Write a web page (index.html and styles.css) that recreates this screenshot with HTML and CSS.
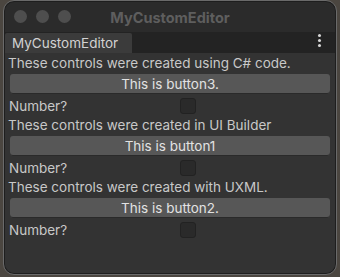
FILE: index.html
```html
<!DOCTYPE html>
<html>
<head>
<meta charset="utf-8">
<link rel="stylesheet" href="styles.css">
</head>
<body>
<div class="window">
  <div class="titlebar">
    <div class="lights">
      <span class="light"></span><span class="light"></span><span class="light"></span>
    </div>
    <div class="title">MyCustomEditor</div>
  </div>
  <div class="tabbar">
    <div class="tab">MyCustomEditor</div>
    <div class="kebab"><span></span><span></span><span></span></div>
  </div>
  <div class="content">
    <div class="group">
      <div class="label">These controls were created using C# code.</div>
      <div class="button">This is button3.</div>
      <div class="field"><span class="field-label">Number?</span><span class="checkbox"></span></div>
    </div>
    <div class="group">
      <div class="label">These controls were created in UI Builder</div>
      <div class="button">This is button1</div>
      <div class="field"><span class="field-label">Number?</span><span class="checkbox"></span></div>
    </div>
    <div class="group">
      <div class="label">These controls were created with UXML.</div>
      <div class="button">This is button2.</div>
      <div class="field"><span class="field-label">Number?</span><span class="checkbox"></span></div>
    </div>
  </div>
</div>
</body>
</html>
```
FILE: styles.css
```css
html, body {
  margin: 0;
  padding: 0;
  height: 100%;
}
body {
  background: #4b4640;
  font-family: Inter, "Noto Sans", sans-serif;
  font-size: 13.5px;
  overflow: hidden;
}
.window {
  margin: 0 3px;
  height: 275px;
  box-sizing: border-box;
  border: 1px solid #6a6a6a;
  border-radius: 11px;
  background: #2b2b2b;
  display: flex;
  flex-direction: column;
  overflow: hidden;
  box-shadow: inset 0 0 0 1px #1e1e1e;
}
.titlebar {
  height: 31px;
  flex: none;
  position: relative;
  display: flex;
  align-items: center;
  justify-content: center;
}
.lights {
  position: absolute;
  left: 10px;
  top: 9px;
  display: flex;
  gap: 9px;
}
.light {
  width: 13px;
  height: 13px;
  border-radius: 50%;
  background: #4e4e4e;
}
.title {
  font-weight: 700;
  font-size: 14.5px;
  color: #5e5e5e;
  margin-top: 1px;
}
.tabbar {
  height: 21px;
  flex: none;
  background: #232323;
  display: flex;
  align-items: flex-end;
  justify-content: space-between;
  margin: 0 1px;
}
.tab {
  width: 120px;
  height: 20px;
  background: #3b3b3b;
  color: #d2d2d2;
  padding-left: 7px;
  line-height: 20px;
  border-radius: 2px 2px 0 0;
  font-size: 13.5px;
}
.kebab {
  display: flex;
  flex-direction: column;
  gap: 2px;
  margin: 0 14px 4px 0;
  align-self: center;
}
.kebab span {
  width: 3px;
  height: 3px;
  border-radius: 50%;
  background: #d8d8d8;
}
.content {
  flex: 1;
  background: #333333;
  margin: 0 1px 1px;
  padding: 1px 3px 0 3px;
  border-radius: 0 0 9px 9px;
  color: #c8c8c8;
}
.label {
  height: 18px;
  line-height: 18px;
  white-space: nowrap;
}
.button {
  margin: 2px;
  height: 20px;
  line-height: 20px;
  text-align: center;
  background: #575757;
  border-radius: 3px;
  color: #e2e2e2;
  box-shadow: inset 0 -1px 0 #2a2a2a;
}
.field {
  height: 20px;
  display: flex;
  align-items: center;
  padding-left: 1px;
}
.field-label {
  width: 171px;
  flex: none;
}
.checkbox {
  width: 14px;
  height: 14px;
  background: #2a2a2a;
  border: 1px solid #222;
  border-radius: 3px;
}
```
